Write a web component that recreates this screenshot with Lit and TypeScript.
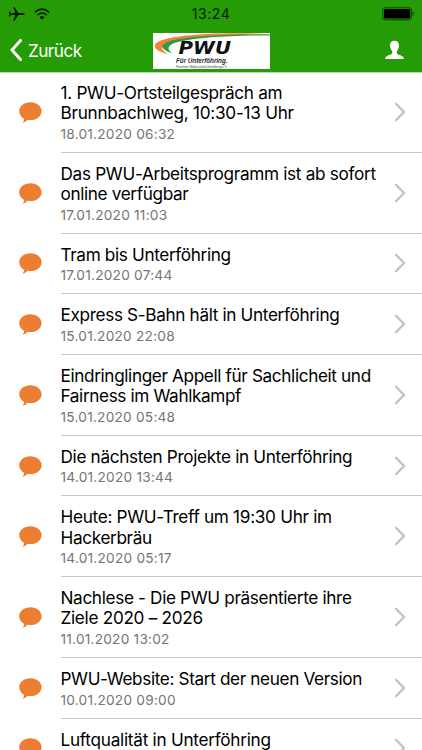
import { LitElement, html, css } from "lit";
import { customElement, property } from "lit/decorators.js";

interface Entry {
  lines: string[];
  date: string;
  spacing: number[];
}

const entries: Entry[] = [
  { lines: ["1. PWU-Ortsteilgespräch am", "Brunnbachlweg, 10:30-13 Uhr"], date: "18.01.2020 06:32", spacing: [-0.29, -0.28] },
  { lines: ["Das PWU-Arbeitsprogramm ist ab sofort", "online verfügbar"], date: "17.01.2020 11:03", spacing: [-0.32, -0.37] },
  { lines: ["Tram bis Unterföhring"], date: "17.01.2020 07:44", spacing: [-0.36] },
  { lines: ["Express S-Bahn hält in Unterföhring"], date: "15.01.2020 22:08", spacing: [-0.355] },
  { lines: ["Eindringlinger Appell für Sachlicheit und", "Fairness im Wahlkampf"], date: "15.01.2020 05:48", spacing: [-0.37, -0.38] },
  { lines: ["Die nächsten Projekte in Unterföhring"], date: "14.01.2020 13:44", spacing: [-0.34] },
  { lines: ["Heute: PWU-Treff um 19:30 Uhr im", "Hackerbräu"], date: "14.01.2020 05:17", spacing: [-0.31, -0.35] },
  { lines: ["Nachlese - Die PWU präsentierte ihre", "Ziele 2020 – 2026"], date: "11.01.2020 13:02", spacing: [-0.35, -0.3] },
  { lines: ["PWU-Website: Start der neuen Version"], date: "10.01.2020 09:00", spacing: [-0.37] },
  { lines: ["Luftqualität in Unterföhring"], date: "", spacing: [-0.27] },
];

@customElement("status-bar")
class StatusBar extends LitElement {
  static styles = css`
    :host { display: grid; grid-template-columns: 1fr auto 1fr; align-items: center; height: 27px; padding: 0 8px; color: #061d02; }
    .left { display: flex; align-items: center; gap: 9px; }
    .time { font-size: 14px; line-height: 27px; letter-spacing: 0.6px; }
    .battery { justify-self: end; margin-right: -1px; }
    svg { display: block; }
  `;
  render() {
    return html`
      <div class="left">
        <svg width="17" height="16" viewBox="0 0 17 16"><path fill="#061d02" d="M16.700 8c0-.6-.9-.9-2-.9h-4.300L6.600 1.200H5.300l1.900 5.900-4 .2L1.700 5.300H.9L1.400 8l-.5 2.700h.8l1.500-2 4 .2-1.900 5.900h1.300l3.800-5.900h4.300c1.100 0 2-.3 2-.9z"/></svg>
        <svg width="16" height="12" viewBox="0 0 16 12" fill="none" stroke="#061d02" stroke-width="1.600"><path d="M.8 4.300Q8-2 15.200 4.300M3.400 7Q8 3 12.600 7"/><path d="M8 11.700 5.400 9.100Q8 7 10.600 9.100z" fill="#061d02" stroke="none"/></svg>
      </div>
      <div class="time">13:24</div>
      <svg class="battery" width="33" height="14" viewBox="0 0 33 14"><rect x=".8" y=".8" width="28.600" height="12" rx="2" fill="none" stroke="#0b4200"/><rect x="2" y="2" width="26.200" height="9.600" rx=".8" fill="#000"/><path d="M30.600 4.600Q32.600 6.800 30.600 9z" fill="#061d02"/></svg>
    `;
  }
}

@customElement("pwu-logo")
class PwuLogo extends LitElement {
  static styles = css`
    :host { display: block; width: 117px; height: 36px; background: #fff; overflow: hidden; }
    svg { display: block; }
    text { font-family: "Liberation Sans", sans-serif; fill: #111; font-style: italic; font-weight: 700; }
    .name { font-family: "DejaVu Sans", sans-serif; font-size: 18.500px; }
    .claim { font-size: 6.900px; fill: #2b2b2b; }
    .sub { font-size: 3px; font-weight: 400; fill: #333; }
  `;
  render() {
    return html`
      <svg width="117" height="36" viewBox="0 0 117 36">
        <path fill="#ee8434" d="M117 .9C74-.7 32 .8 11 6.500-4 11 0 17.500 15.500 21.500 8 17 6 13.500 15 10 34 3.400 75 1.400 117 1.700z"/>
        <path fill="#2e9b4b" d="M117 1.700C78 1 38 3 19 7.500 5 11.500 7 16 19 20.500 14 16 14 13 22 9.800 40 4.300 78 2.400 117 2.400z"/>
        <text class="name" x="25.500" y="21.300" textLength="52.500" lengthAdjust="spacingAndGlyphs">PWU</text>
        <text class="claim" x="23" y="29.700" textLength="51.500" lengthAdjust="spacingAndGlyphs">Für Unterföhring.</text>
        <text class="sub" x="23" y="35" textLength="51" lengthAdjust="spacingAndGlyphs">Parteifreie Wählerschaft Unterföhring e.V.</text>
      </svg>
    `;
  }
}

@customElement("nav-bar")
class NavBar extends LitElement {
  static styles = css`
    :host { display: grid; grid-template-columns: 1fr auto 1fr; height: 45px; padding: 0 18px 0 10px; color: #fff; box-sizing: border-box; }
    .back { display: flex; align-items: center; gap: 6px; height: 46px; }
    .label { font-size: 17.200px; letter-spacing: -0.550px; }
    .logo { margin: 6px 0 0 8px; }
    .user { justify-self: end; margin-top: 13px; }
    svg { display: block; }
  `;
  render() {
    return html`
      <div class="back">
        <svg width="12" height="22" viewBox="0 0 12 22"><path d="M10.500 1.500 2 11l8.500 9.500" fill="none" stroke="#fff" stroke-width="3" stroke-linecap="round"/></svg>
        <span class="label">Zurück</span>
      </div>
      <pwu-logo class="logo"></pwu-logo>
      <svg class="user" width="19" height="20" viewBox="0 0 19 20"><path fill="#fff" d="M9.500.8c3 0 4.600 1.900 4.500 4.700-.1 2.400-1 4-1.900 5.200-.6.9-.5 2.700.3 3.200 1.300.9 5 1.500 6.100 3.300.3.500.3 1.100.2 1.800H.3c-.1-.7-.1-1.300.2-1.800 1.100-1.800 4.800-2.400 6.100-3.300.8-.5.900-2.300.3-3.200C6 9.500 5.100 7.900 5 5.500 4.900 2.700 6.500.8 9.500.8z"/></svg>
    `;
  }
}

@customElement("news-row")
class NewsRow extends LitElement {
  @property({ attribute: false }) entry!: Entry;
  static styles = css`
    :host { display: flex; align-items: stretch; }
    .icon { width: 60.500px; flex: none; display: flex; align-items: center; padding-left: 19px; box-sizing: border-box; }
    .body { flex: 1; display: flex; align-items: center; justify-content: space-between; border-bottom: 1px solid #c8c7cc; padding-right: 16px; }
    .text { padding: 11px 0 9.100px; white-space: nowrap; }
    .line { font-size: 17.200px; line-height: 20.250px; color: #000; }
    .date { font-size: 13.700px; height: 18px; line-height: 18px; margin-top: 1.250px; color: #757575; letter-spacing: 0.220px; }
    .chevron { flex: none; }
    svg { display: block; }
  `;
  render() {
    const { lines, date, spacing } = this.entry;
    return html`
      <div class="icon">
        <svg width="23" height="21" viewBox="0 0 23 21"><path fill="#ed7d31" d="M11.400.3c6.200 0 11.200 3.900 11.200 8.900s-5 8.900-11.200 8.900c-1 0-2-.1-2.900-.3-1.100 1.300-2.600 2.300-4.200 2.700-.4.100-.5-.3-.3-.6.700-.9 1.200-1.900 1.300-3C2.200 15.300.2 12.500.2 9.200.2 4.200 5.200.3 11.400.3z"/></svg>
      </div>
      <div class="body">
        <div class="text">
          ${lines.map((l, i) => html`<div class="line" style="letter-spacing:${spacing[i]}px">${l}</div>`)}
          <div class="date">${date}</div>
        </div>
        <svg class="chevron" width="12" height="20" viewBox="0 0 12 20"><path d="M2 1.800 10 10l-8 8.200" fill="none" stroke="#c2c2c4" stroke-width="2.300" stroke-linecap="round"/></svg>
      </div>
    `;
  }
}

@customElement("app-root")
class AppRoot extends LitElement {
  static styles = css`
    :host { display: flex; flex-direction: column; height: 750px; width: 422px; overflow: hidden; background: #fff; font-family: Inter, "Liberation Sans", sans-serif; }
    .header { flex: none; height: 72px; background: #259b06; box-shadow: 0 1px 0 #b4ddb0; }
    .list { flex: 1; min-height: 0; overflow: hidden; }
  `;
  render() {
    return html`
      <header class="header">
        <status-bar></status-bar>
        <nav-bar></nav-bar>
      </header>
      <main class="list">${entries.map((e) => html`<news-row .entry=${e}></news-row>`)}</main>
    `;
  }
}
